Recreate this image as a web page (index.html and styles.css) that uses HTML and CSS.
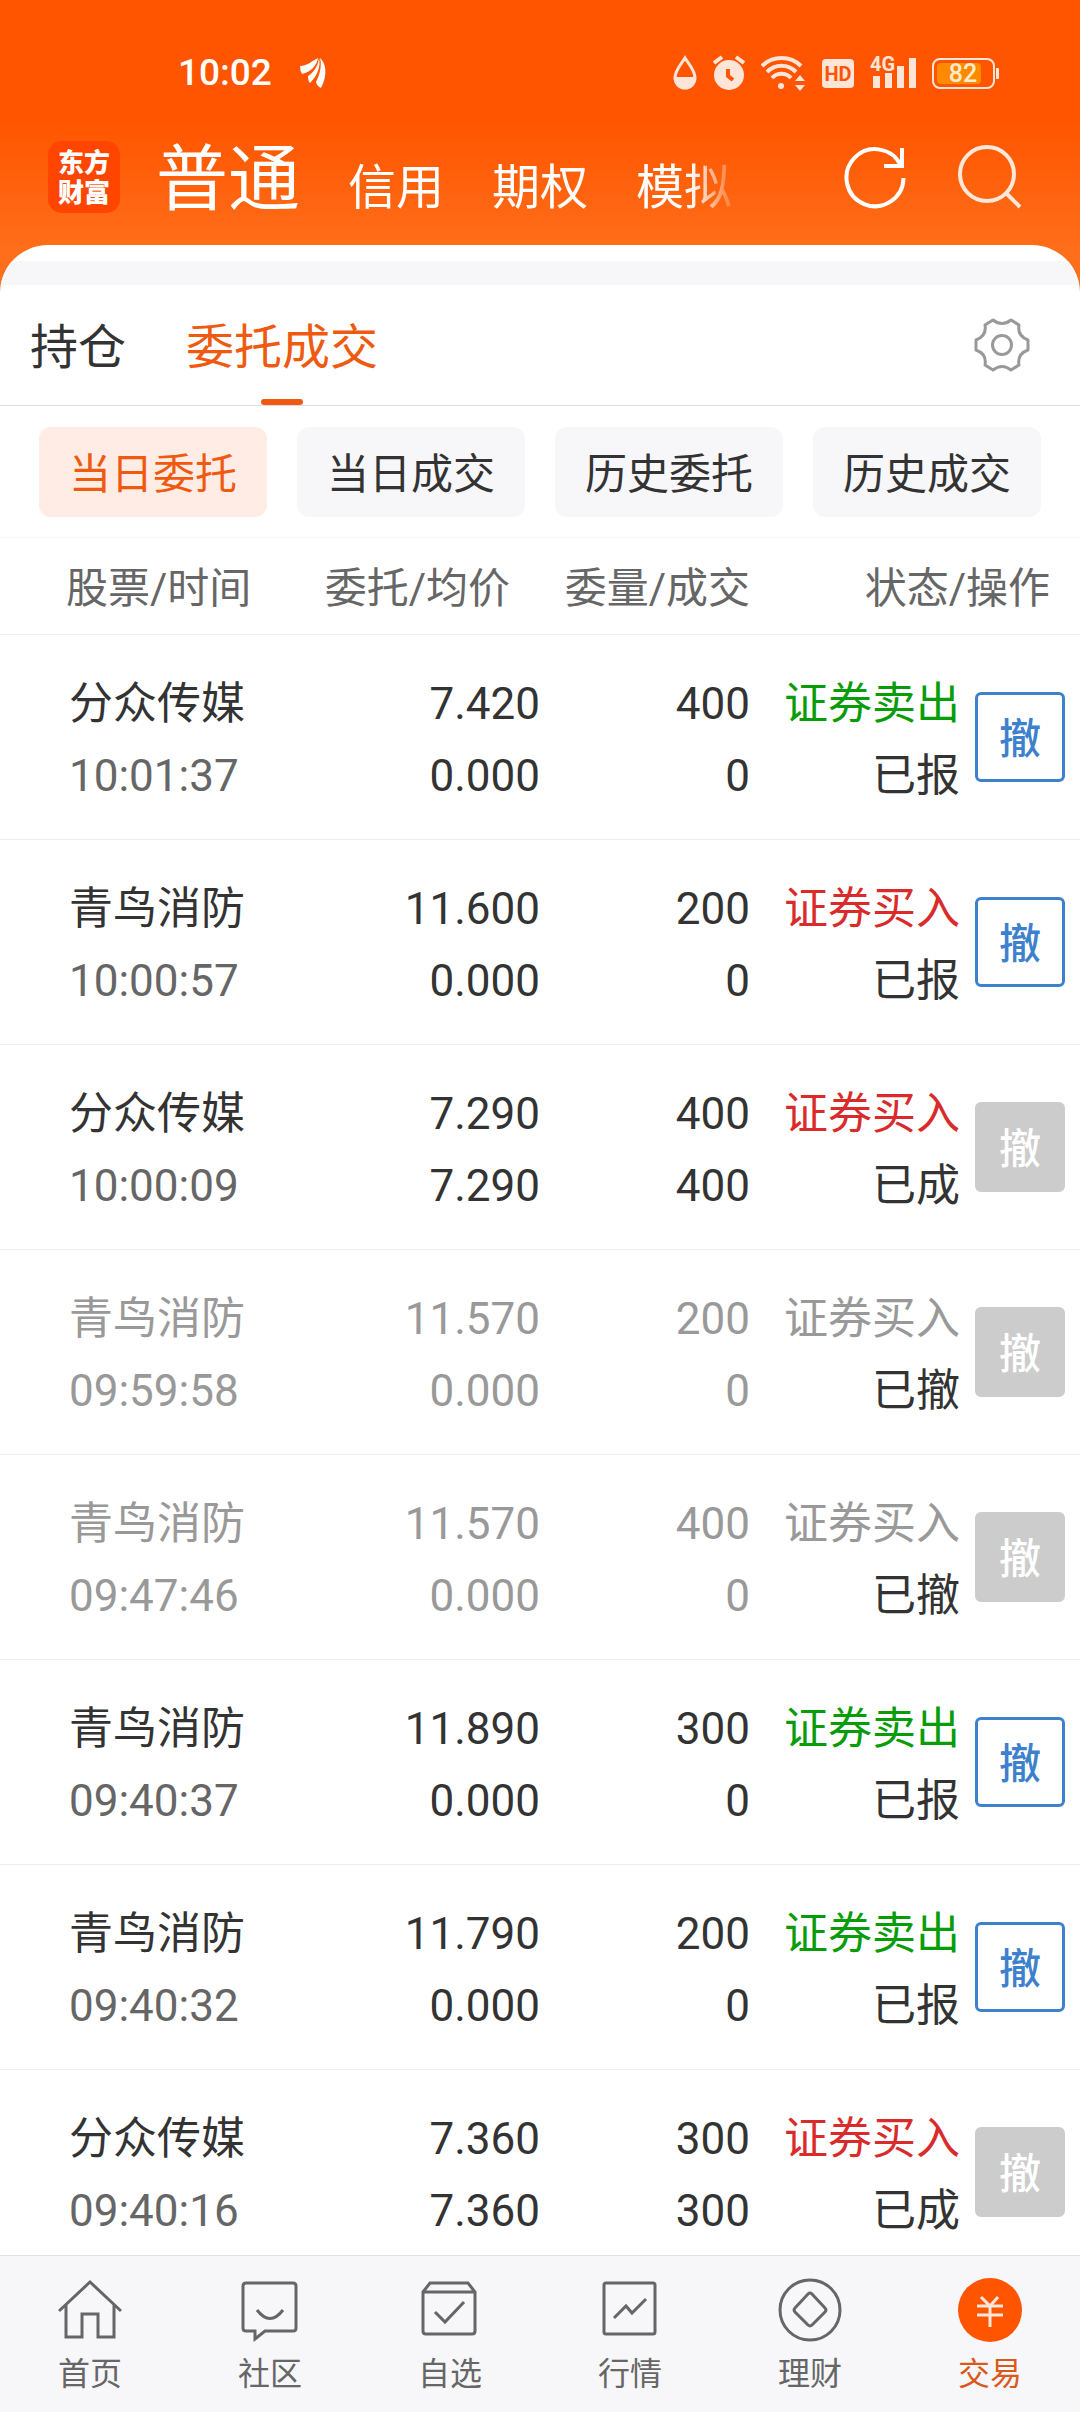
FILE: index.html
```html
<!DOCTYPE html>
<html lang="zh-CN">
<head>
    <meta charset="UTF-8">
    <meta name="viewport" content="width=device-width, initial-scale=1.0">
    <title>委托成交</title>
    <link rel="stylesheet" href="styles.css">
</head>
<body>
    <div class="app">
        <div class="status-bar">
            <span class="clock">10:02</span>
            <svg class="notice" width="28" height="32" viewBox="0 0 28 32" fill="currentColor">
                <path d="M0 9C7 9 12 4 18 1C17 8 11 15 2 17Q0 14 0 9z"/>
                <path d="M8 19C14 15 18 9 19 1C21 10 17 19 10 26Q8 24 8 19z"/>
                <path d="M16 25C20 17 22 9 20 1C26 6 28 18 21 31Q17 29 16 25z"/>
            </svg>
            <div class="status-icons">
                <svg width="24" height="36" viewBox="0 0 24 36">
                    <path d="M12 3C9 8 2 15 2 23a10 10 0 0 0 20 0C22 15 15 8 12 3z" fill="none" stroke="currentColor" stroke-width="3"/>
                    <path d="M2 22h20c0 7-4 12-10 12S2 29 2 22z" fill="currentColor"/>
                </svg>
                <svg width="32" height="36" viewBox="0 0 32 36">
                    <circle cx="16" cy="20" r="15" fill="currentColor"/>
                    <path d="M1 8l8-6M31 8l-8-6" fill="none" stroke="currentColor" stroke-width="4"/>
                    <path d="M15 14v7l5 4" fill="none" stroke="#ff5500" stroke-width="4"/>
                </svg>
                <svg width="45" height="36" viewBox="0 0 45 36">
                    <path d="M1 11a28 28 0 0 1 39 0M6 17a20 20 0 0 1 29 0M11 23a13 13 0 0 1 19 0" fill="none" stroke="currentColor" stroke-width="4"/>
                    <circle cx="20" cy="31" r="3" fill="currentColor"/>
                    <path d="M34 26l5-6 5 6zM34 30h10l-5 6z" fill="currentColor"/>
                </svg>
                <svg width="32" height="36" viewBox="0 0 32 36">
                    <rect x="0" y="4" width="32" height="29" rx="4" fill="currentColor"/>
                    <text x="16" y="26" class="hd-text">HD</text>
                </svg>
                <svg width="46" height="36" viewBox="0 0 46 36">
                    <path d="M3 21h7v12H3zM15 18h7v15h-7zM27 11h7v22h-7zM39 3h7v30h-7z" fill="currentColor"/>
                    <text x="0" y="16" class="net-text">4G</text>
                </svg>
                <svg width="68" height="36" viewBox="0 0 68 36">
                    <rect x="1" y="4" width="61" height="29" rx="7" fill="none" stroke="currentColor" stroke-width="2"/>
                    <path d="M64 13h2q1 0 1 1v9q0 1-1 1h-2z" fill="currentColor"/>
                    <rect x="5" y="8" width="44" height="21" rx="4" fill="#ff8a00"/>
                    <text x="31" y="27" class="battery-text">82</text>
                </svg>
            </div>
        </div>

        <header class="top-bar">
            <div class="logo"><span>东方</span><span>财富</span></div>
            <nav class="accounts">
                <a href="#" class="current">普通</a>
                <a href="#">信用</a>
                <a href="#">期权</a>
                <a href="#">模拟</a>
            </nav>
            <button class="icon-btn" aria-label="刷新">
                <svg width="66" height="66" viewBox="0 0 66 66" fill="none" stroke="currentColor" stroke-width="4">
                    <path d="M61.500 34A28.500 28.500 0 1 1 59 22"/>
                    <path d="M42 22h20M60 4v20"/>
                </svg>
            </button>
            <button class="icon-btn search" aria-label="搜索">
                <svg width="66" height="66" viewBox="0 0 66 66" fill="none" stroke="currentColor" stroke-width="4">
                    <circle cx="31" cy="30" r="27"/>
                    <path d="M50 49l14 14"/>
                </svg>
            </button>
        </header>

        <main class="panel">
            <div class="strip"></div>
            <div class="tabs">
                <button class="tab">持仓</button>
                <button class="tab active">委托成交</button>
                <button class="settings" aria-label="设置">
                    <svg width="56" height="56" viewBox="-28 -28 56 56" fill="none" stroke="currentColor" stroke-width="3" stroke-linejoin="round">
                        <path d="M-9-25Q0-18 9-25L17-20Q15-9 26-5L26 5Q15 9 17 20L9 25Q0 18-9 25L-17 20Q-15 9-26 5L-26-5Q-15-9-17-20Z"/>
                        <circle r="9.500"/>
                    </svg>
                </button>
            </div>
            <div class="chips">
                <button class="chip active">当日委托</button>
                <button class="chip">当日成交</button>
                <button class="chip">历史委托</button>
                <button class="chip">历史成交</button>
            </div>

            <div class="list">
                <table class="orders">
                    <colgroup>
                        <col class="col-name">
                        <col class="col-price">
                        <col class="col-amount">
                        <col class="col-state">
                        <col class="col-action">
                    </colgroup>
                    <thead>
                        <tr>
                            <th class="name">股票/时间</th>
                            <th class="price">委托/均价</th>
                            <th>委量/成交</th>
                            <th class="state" colspan="2">状态/操作</th>
                        </tr>
                    </thead>
                    <tbody>
                        <tr class="sell">
                            <td><span>分众传媒</span><span class="time">10:01:37</span></td>
                            <td><span>7.420</span><span>0.000</span></td>
                            <td><span>400</span><span>0</span></td>
                            <td><span class="side">证券卖出</span><span class="result">已报</span></td>
                            <td><button class="cancel">撤</button></td>
                        </tr>
                        <tr class="buy">
                            <td><span>青鸟消防</span><span class="time">10:00:57</span></td>
                            <td><span>11.600</span><span>0.000</span></td>
                            <td><span>200</span><span>0</span></td>
                            <td><span class="side">证券买入</span><span class="result">已报</span></td>
                            <td><button class="cancel">撤</button></td>
                        </tr>
                        <tr class="buy">
                            <td><span>分众传媒</span><span class="time">10:00:09</span></td>
                            <td><span>7.290</span><span>7.290</span></td>
                            <td><span>400</span><span>400</span></td>
                            <td><span class="side">证券买入</span><span class="result">已成</span></td>
                            <td><button class="cancel" disabled>撤</button></td>
                        </tr>
                        <tr class="revoked">
                            <td><span>青鸟消防</span><span class="time">09:59:58</span></td>
                            <td><span>11.570</span><span>0.000</span></td>
                            <td><span>200</span><span>0</span></td>
                            <td><span class="side">证券买入</span><span class="result">已撤</span></td>
                            <td><button class="cancel" disabled>撤</button></td>
                        </tr>
                        <tr class="revoked">
                            <td><span>青鸟消防</span><span class="time">09:47:46</span></td>
                            <td><span>11.570</span><span>0.000</span></td>
                            <td><span>400</span><span>0</span></td>
                            <td><span class="side">证券买入</span><span class="result">已撤</span></td>
                            <td><button class="cancel" disabled>撤</button></td>
                        </tr>
                        <tr class="sell">
                            <td><span>青鸟消防</span><span class="time">09:40:37</span></td>
                            <td><span>11.890</span><span>0.000</span></td>
                            <td><span>300</span><span>0</span></td>
                            <td><span class="side">证券卖出</span><span class="result">已报</span></td>
                            <td><button class="cancel">撤</button></td>
                        </tr>
                        <tr class="sell">
                            <td><span>青鸟消防</span><span class="time">09:40:32</span></td>
                            <td><span>11.790</span><span>0.000</span></td>
                            <td><span>200</span><span>0</span></td>
                            <td><span class="side">证券卖出</span><span class="result">已报</span></td>
                            <td><button class="cancel">撤</button></td>
                        </tr>
                        <tr class="buy">
                            <td><span>分众传媒</span><span class="time">09:40:16</span></td>
                            <td><span>7.360</span><span>7.360</span></td>
                            <td><span>300</span><span>300</span></td>
                            <td><span class="side">证券买入</span><span class="result">已成</span></td>
                            <td><button class="cancel" disabled>撤</button></td>
                        </tr>
                    </tbody>
                </table>
            </div>
        </main>

        <nav class="bottom-nav">
            <a href="#">
                <svg viewBox="0 0 64 64"><path d="M1 33L32 4l31 29M8 27v32h16V36h16v23h16V27"/></svg>
                首页
            </a>
            <a href="#">
                <svg viewBox="0 0 64 64"><path d="M8 5h47q3 0 3 3v42q0 3-3 3H27l-10 8v-8H8q-3 0-3-3V8q0-3 3-3zM19 32q13 17 26 0"/></svg>
                社区
            </a>
            <a href="#">
                <svg viewBox="0 0 64 64"><path d="M5 14l7-9h38l7 9v39q0 3-3 3H8q-3 0-3-3zM5 14h52M17 34l10 10 19-20"/></svg>
                自选
            </a>
            <a href="#">
                <svg viewBox="0 0 64 64"><rect x="6" y="5" width="51" height="51" rx="2"/><path d="M16 40l12-12 6 7 14-14"/></svg>
                行情
            </a>
            <a href="#">
                <svg viewBox="0 0 64 64"><circle cx="32" cy="32" r="30"/><path d="M30 16q2-2 4 0l13 14q2 2 0 4L34 47q-2 2-4 0L17 34q-2-2 0-4z"/></svg>
                理财
            </a>
            <a href="#" class="active">
                <svg viewBox="0 0 64 64"><circle cx="32" cy="32" r="32"/><path d="M23 19l9 9 8-9M19 28h26M19 37h26M32 28v21"/></svg>
                交易
            </a>
        </nav>
    </div>
</body>
</html>
```

FILE: styles.css
```css
:root {
    --orange: #ff5500;
    --accent: #f05a10;
    --text-color: #333333;
    --muted: #666666;
    --faded: #999999;
    --light-gray: #f7f7fa;
    --line: #eeeeee;
    --blue: #3d80cc;
}

* {
    box-sizing: border-box;
    margin: 0;
    padding: 0;
}

body {
    font-family: Roboto, 'Noto Sans CJK SC', sans-serif;
    color: var(--text-color);
}

button {
    font: inherit;
    color: inherit;
    background: none;
    border: none;
    cursor: pointer;
}

a {
    color: inherit;
    text-decoration: none;
}

svg {
    display: block;
    flex: none;
}

.app {
    display: flex;
    flex-direction: column;
    height: 100vh;
    background: linear-gradient(var(--orange) 120px, #ff6e1a 250px);
}

/* status bar */
.status-bar {
    display: flex;
    align-items: center;
    padding: 49px 80px 0 178px;
    line-height: 48px;
    color: #ffffff;
}

.clock {
    font-size: 37px;
    font-weight: 500;
}

.notice {
    margin-left: 28px;
}

.status-icons {
    display: flex;
    align-items: center;
    gap: 16px;
    margin-left: auto;
    color: #ffe5d8;
}

.hd-text {
    font-size: 20px;
    font-weight: 700;
    text-anchor: middle;
    fill: var(--orange);
}

.net-text {
    font-size: 20px;
    font-weight: 700;
    fill: currentColor;
    stroke: var(--orange);
    stroke-width: 3px;
    paint-order: stroke;
}

.battery-text {
    font-size: 25px;
    font-weight: 500;
    text-anchor: middle;
    fill: #ffeccc;
}

/* top bar */
.top-bar {
    display: flex;
    align-items: center;
    height: 148px;
    padding: 12px 58px 0 48px;
    color: #ffffff;
}

.logo {
    display: flex;
    flex-direction: column;
    justify-content: center;
    align-items: center;
    width: 72px;
    height: 72px;
    padding-top: 2px;
    border-radius: 14px;
    background-color: #ff4500;
    font-size: 26px;
    font-weight: 900;
    line-height: 30px;
}

.accounts {
    display: flex;
    flex: 1;
    align-items: baseline;
    gap: 48px;
    margin: 0 102px 0 36px;
    padding-top: 14px;
    font-size: 48px;
    line-height: 108px;
    white-space: nowrap;
    overflow: hidden;
    mask-image: linear-gradient(to right, #000000 calc(100% - 50px), transparent);
}

.accounts .current {
    font-size: 72px;
}

.icon-btn + .icon-btn {
    margin-left: 48px;
}

.search {
    color: #ffe8da;
}

/* panel */
.panel {
    display: flex;
    flex: 1;
    flex-direction: column;
    min-height: 0;
    padding-top: 16px;
    background-color: #ffffff;
    border-radius: 48px 48px 0 0;
    overflow: hidden;
}

.strip {
    flex: none;
    height: 24px;
    background-color: var(--light-gray);
}

.tabs {
    display: flex;
    flex: none;
    align-items: center;
    gap: 60px;
    height: 121px;
    padding: 0 50px 0 30px;
    border-bottom: 1px solid #dddddd;
}

.tab {
    position: relative;
    padding-top: 6px;
    font-size: 48px;
    line-height: 114px;
}

.tab.active {
    color: var(--accent);
}

.tab.active::after {
    content: '';
    position: absolute;
    left: 50%;
    bottom: 0;
    width: 42px;
    height: 6px;
    margin-left: -21px;
    border-radius: 3px;
    background-color: var(--accent);
}

.settings {
    margin-left: auto;
    color: var(--faded);
}

.chips {
    display: grid;
    flex: none;
    grid-template-columns: repeat(4, 1fr);
    gap: 30px;
    padding: 21px 39px 20px;
    border-bottom: 1px solid #f7f7f7;
}

.chip {
    padding-top: 6px;
    border-radius: 12px;
    background-color: var(--light-gray);
    font-size: 42px;
    line-height: 84px;
}

.chip.active {
    color: var(--accent);
    background-color: #ffede5;
}

/* orders */
.list {
    flex: 1;
    min-height: 0;
    overflow-y: auto;
    scrollbar-width: none;
}

.orders {
    width: 100%;
    table-layout: fixed;
    border-spacing: 0;
    text-align: right;
    font-size: 44px;
    line-height: 72px;
}

.col-name {
    width: 28%;
}

.col-price {
    width: 22%;
}

.col-amount,
.col-state {
    width: 210px;
}

.orders th {
    padding: 15px 0 9px;
    border-bottom: 1px solid var(--line);
    font-size: 42px;
    font-weight: 400;
    text-align: right;
    color: var(--muted);
}

.orders th.name {
    padding-left: 66px;
    text-align: left;
}

.orders th.price,
.orders th.state {
    padding-right: 30px;
}

.orders td {
    padding: 33px 0 27px;
    border-bottom: 1px solid var(--line);
}

.orders td:first-child {
    padding-left: 69px;
    text-align: left;
}

.orders td:last-child {
    padding: 30px 15px 30px 0;
}

.orders span {
    display: block;
}

.time {
    color: var(--muted);
}

.sell .side {
    color: #099c09;
}

.buy .side {
    color: #d92b2b;
}

.revoked,
.revoked .time {
    color: var(--faded);
}

.revoked .result {
    color: var(--text-color);
}

.cancel {
    display: block;
    width: 90px;
    padding-top: 6px;
    margin-left: auto;
    border: 3px solid var(--blue);
    border-radius: 6px;
    font-size: 42px;
    font-weight: 500;
    line-height: 78px;
    color: var(--blue);
}

.cancel:disabled {
    border-color: #cccccc;
    background-color: #cccccc;
    color: #ffffff;
    cursor: default;
}

/* bottom nav */
.bottom-nav {
    display: flex;
    padding: 22px 0 14px;
    border-top: 1px solid #e2e2e2;
    background-color: var(--light-gray);
    font-size: 32px;
    line-height: 48px;
    color: var(--muted);
}

.bottom-nav a {
    display: flex;
    flex: 1;
    flex-direction: column;
    align-items: center;
    gap: 8px;
}

.bottom-nav svg {
    width: 64px;
    height: 64px;
    fill: none;
    stroke: currentColor;
    stroke-width: 3;
}

.bottom-nav .active {
    color: #d95a1a;
}

.bottom-nav .active circle {
    fill: var(--orange);
    stroke: none;
}

.bottom-nav .active path {
    stroke: #ffe8da;
}
```
